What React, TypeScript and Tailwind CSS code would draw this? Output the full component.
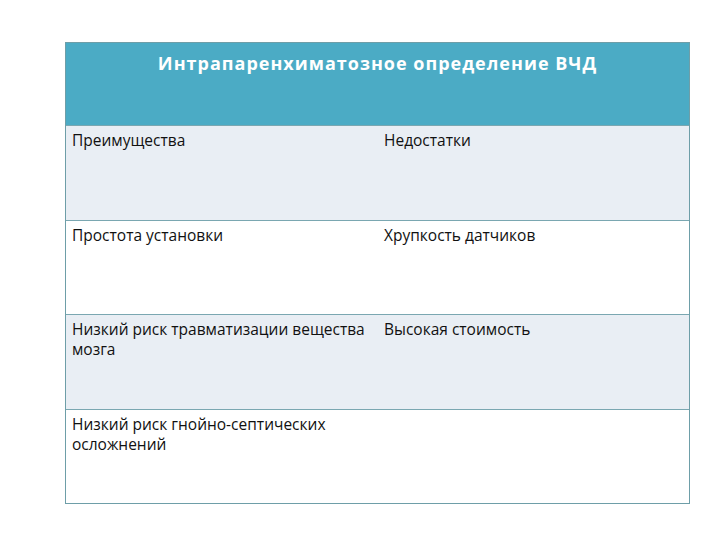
const rows: [string, string][] = [
  ["Преимущества", "Недостатки"],
  ["Простота установки", "Хрупкость датчиков"],
  ["Низкий риск травматизации вещества мозга", "Высокая стоимость"],
  ["Низкий риск гнойно-септических осложнений", ""],
];

export default function App() {
  return (
    <div className="h-[540px] w-[720px] bg-white pl-[65px] pt-[42px]" style={{ fontFamily: '"Open Sans", "Liberation Sans", sans-serif' }}>
      <div className="w-[625px] border border-[#6e9ea8]">
        <div className="h-[82px] bg-[#4babc5] pt-[7px] text-center text-[18px] font-bold tracking-[1px] text-white">
          Интрапаренхиматозное определение ВЧД
        </div>
        {rows.map(([a, b], i) => (
          <div
            key={i}
            className={`grid h-[94.5px] grid-cols-[312px_1fr] border-t border-[#7aa7b1] text-[15.5px] leading-[20px] text-[#111] ${i % 2 === 0 ? "bg-[#e9eef4]" : "bg-white"}`}
          >
            <div className="pl-[6px] pr-[2px] pt-[4px]">{a}</div>
            <div className="pl-[6px] pt-[4px]">{b}</div>
          </div>
        ))}
      </div>
    </div>
  );
}
